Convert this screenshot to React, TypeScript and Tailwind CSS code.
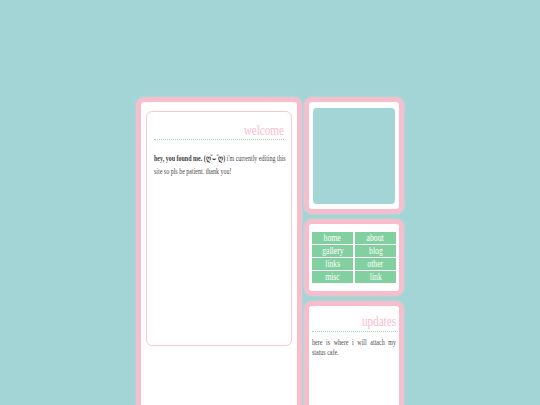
import React from 'react';

const navLinks = ['home', 'about', 'gallery', 'blog', 'links', 'other', 'misc', 'link'];

function Box({ children, className = '' }: { children: React.ReactNode; className?: string }) {
  return (
    <div
      className={`rounded-[7px] border-4 border-[#f8bccb] bg-white shadow-[0_0_2px_1px_#f8c4d1] ${className}`}
    >
      {children}
    </div>
  );
}

// the site font is a narrow serif, so squeeze Liberation Serif horizontally
function Title({ children }: { children: React.ReactNode }) {
  return (
    <>
      <h2 className="origin-right scale-x-[0.72] text-right text-[15.5px] leading-[16px] text-[#f8bccb]">
        {children}
      </h2>
      <div className="mt-[1.5px] border-b-[1.5px] border-dotted border-[#9fd8b8]" />
    </>
  );
}

export default function App() {
  return (
    <div className="h-[405px] overflow-hidden bg-[#a4d5d6] pt-[98px] font-[family-name:'Liberation_Serif',serif]">
      <div className="flex items-start justify-center gap-[4px]">
        {/* main column */}
        <Box className="h-[340px] w-[164px] px-[5px] pt-[9px]">
          <div className="h-[235px] rounded-[6px] border-[1.5px] border-[#f9c8d5] px-[7px] pt-[9.5px]">
            <Title>welcome</Title>
            <p className="mt-[12px] w-[165px] origin-top-left scale-x-[0.8] text-[7.5px] leading-[13px] text-[#4a4a4a]">
              <b className="text-[#3d3d3d]">hey, you found me. (ღ˘⌣˘ღ)</b> i'm currently editing this site so pls be patient. thank you!
            </p>
          </div>
        </Box>

        {/* side column */}
        <div className="flex w-[98px] flex-col gap-[7px]">
          <Box className="px-[4px] pb-[5px] pt-[6px]">
            <div className="h-[96px] rounded-[4px] bg-[#a4d5d6]" />
          </Box>

          <Box className="px-[3px] pb-[8px] pt-[8px]">
            <div className="grid grid-cols-2 gap-x-[2px] gap-y-[1px]">
              {navLinks.map((l) => (
                <div
                  key={l}
                  className="flex h-[12px] items-center justify-center bg-[#82cf9f] text-[10px] leading-none text-white"
                >
                  <span className="inline-block scale-x-[0.77]">{l}</span>
                </div>
              ))}
            </div>
          </Box>

          <Box className="h-[140px] px-[3px] pt-[7px]">
            <Title>updates</Title>
            <p className="mt-[6px] w-[105px] origin-top-left scale-x-[0.8] text-justify text-[7.5px] leading-[10px] text-[#4a4a4a]">
              here is where i will attach my status cafe.
            </p>
          </Box>
        </div>
      </div>
    </div>
  );
}
